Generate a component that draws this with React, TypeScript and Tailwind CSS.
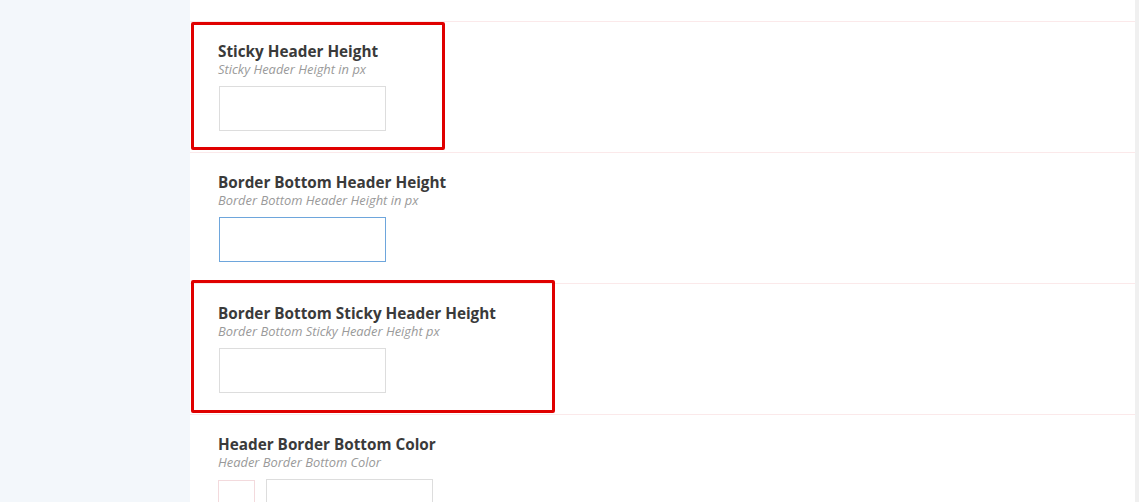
import React from "react";

const fields = [
  { title: "Sticky Header Height", desc: "Sticky Header Height in px", focused: false },
  { title: "Border Bottom Header Height", desc: "Border Bottom Header Height in px", focused: true },
  { title: "Border Bottom Sticky Header Height", desc: "Border Bottom Sticky Header Height px", focused: false },
];

const FieldRow = ({ title, desc, focused }: { title: string; desc: string; focused: boolean }) => {
  return (
    <div className="border-b border-[#fbe9ea] pl-[28px] pt-[20px] pb-[21px]">
      <div className="text-[15.3px] leading-[19px] font-bold text-[#3a3a3a]">{title}</div>
      <div className="text-[12.9px] leading-[16px] italic text-[#9a9a9a] mb-[9px]">{desc}</div>
      {focused ? (
        <div className="ml-[1px] w-[167px] h-[45px] p-[1px] bg-[#6ea6dc]">
          <div className="w-full h-full bg-white" />
        </div>
      ) : (
        <div className="ml-[1px] w-[167px] h-[45px] border border-[#dddddd] bg-white" />
      )}
    </div>
  );
};

export default function App() {
  return (
    <div
      className="flex w-[1139px] h-[502px] overflow-hidden bg-white"
      style={{ fontFamily: '"Open Sans", "Noto Sans", sans-serif' }}
    >
      {/* sidebar */}
      <div className="w-[190px] shrink-0 bg-[#f3f7fb]" />

      {/* options panel */}
      <div className="relative flex-1 bg-white">
        <div className="h-[22px] border-b border-[#fbe9ea]" />
        {fields.map((f, i) => (
          <FieldRow key={i} title={f.title} desc={f.desc} focused={f.focused} />
        ))}
        <div className="pl-[28px] pt-[20px]">
          <div className="text-[15.3px] leading-[19px] font-bold text-[#3a3a3a]">Header Border Bottom Color</div>
          <div className="text-[12.9px] leading-[16px] italic text-[#9a9a9a] mb-[9px]">Header Border Bottom Color</div>
          <div className="flex items-start gap-[11px]">
            <div className="w-[37px] h-[30px] mt-[1px] border border-[#f3dadd] bg-white" />
            <div className="w-[167px] h-[45px] border border-[#dddddd] bg-white" />
          </div>
        </div>

        {/* annotation boxes */}
        <div className="absolute left-[1px] top-[22px] w-[254px] h-[128px] border-[3px] border-[#e00000] rounded-[2px]" />
        <div className="absolute left-[1px] top-[280px] w-[364px] h-[133px] border-[3px] border-[#e00000] rounded-[2px]" />
      </div>

      {/* scrollbar strip */}
      <div className="w-[4px] shrink-0 bg-[#f0f0f0]" />
    </div>
  );
}
